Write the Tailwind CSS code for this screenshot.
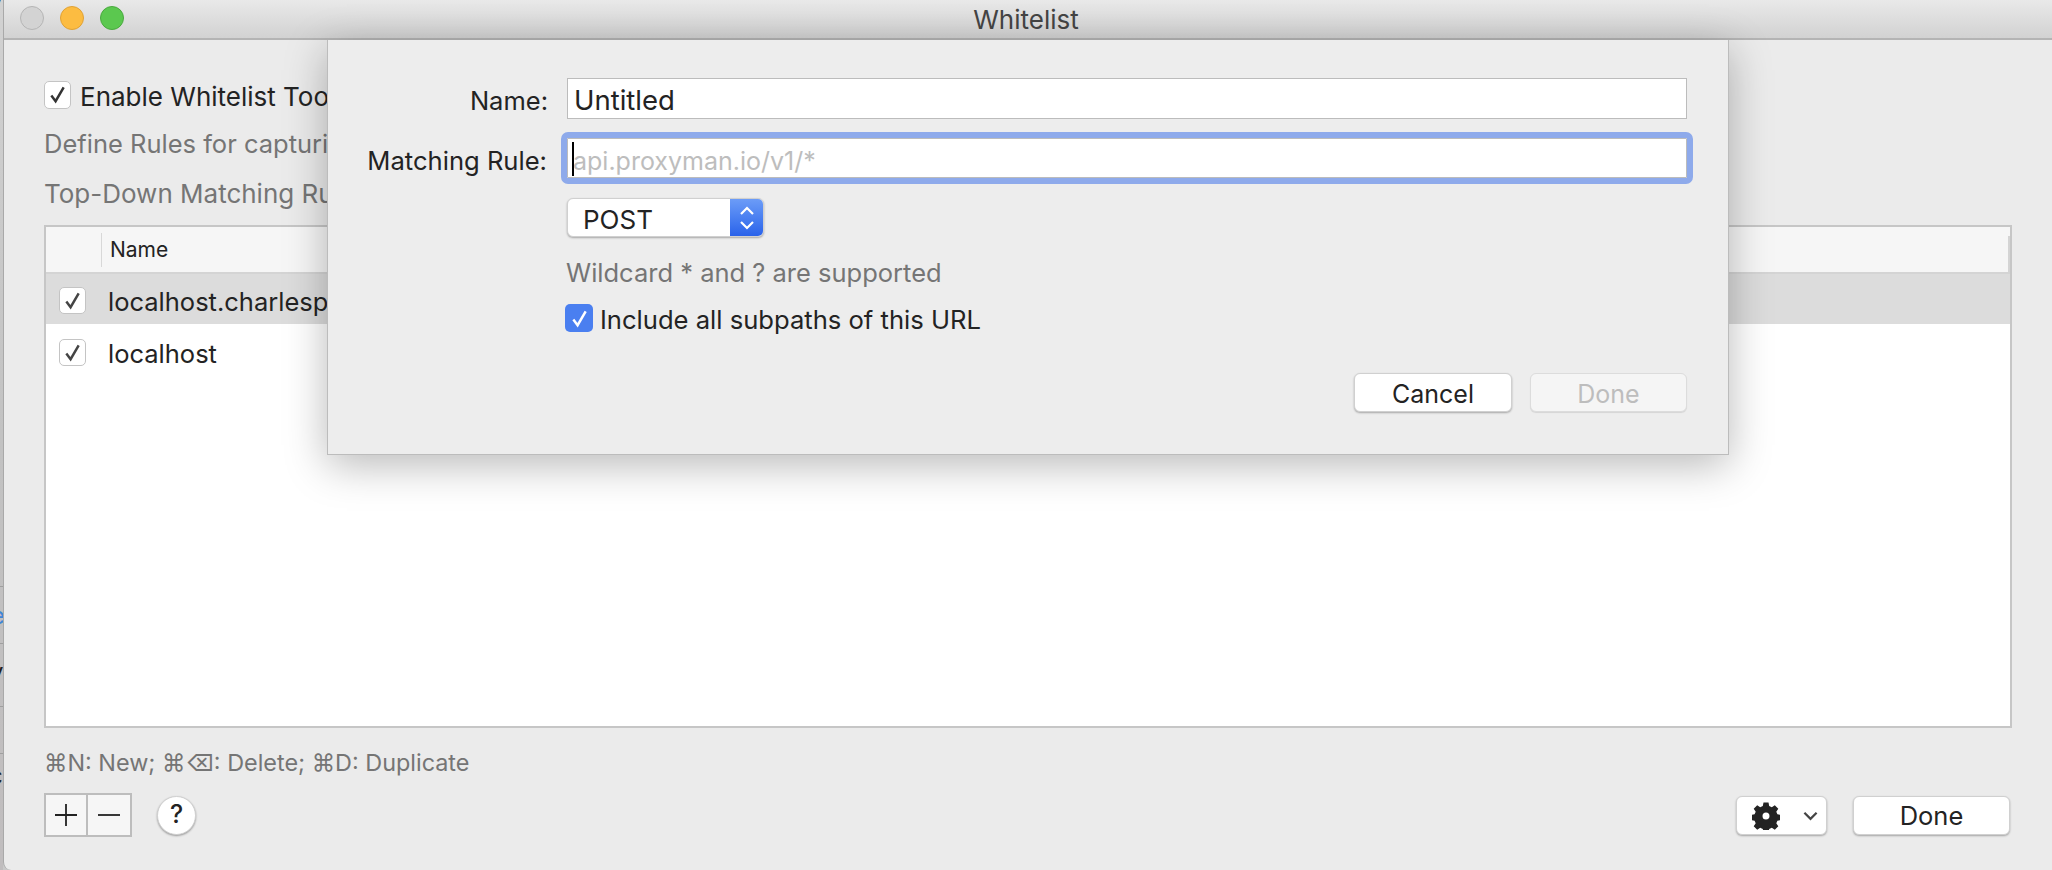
<!DOCTYPE html>
<html lang="en">
<head>
    <meta charset="UTF-8">
    <title>Whitelist</title>
    <script src="https://cdn.jsdelivr.net/npm/@tailwindcss/browser@4"></script>
</head>
<body class="bg-[#c9c9c9] font-['Inter',sans-serif] text-[#232323] overflow-hidden">
    <div class="relative w-[2052px] h-[870px] overflow-hidden flex">
        <!-- sliver of the window behind -->
        <div class="relative w-[3px] shrink-0 overflow-hidden bg-gradient-to-b from-[#d2d2d2] via-[#c2c2c2] to-[#c0bdbe]">
            <span class="absolute left-0 top-[586px] w-full h-[1px] bg-[#9f9f9f]"></span>
            <span class="absolute left-0 top-[643px] w-full h-[1px] bg-[#9f9f9f]"></span>
            <span class="absolute left-0 top-[706px] w-full h-[1px] bg-[#9f9f9f]"></span>
            <span class="absolute left-0 top-[753px] w-full h-[1px] bg-[#9f9f9f]"></span>
            <span class="absolute -left-[9px] top-[600px] text-[24px] leading-[32px] text-[#3f86d6]">e</span>
            <span class="absolute -left-[10px] top-[656px] text-[24px] leading-[32px] text-[#222]">v</span>
            <span class="absolute -left-[11px] top-[760px] text-[24px] leading-[32px] text-[#222]">c</span>
            <span class="absolute -left-[10px] -top-[17px] text-[24px] leading-[32px] text-[#222]">y</span>
        </div>

        <!-- main window -->
        <div class="flex-1 flex flex-col bg-[#ebebeb] border-l border-[#a9a9a9] rounded-bl-lg">
            <div class="relative h-[40px] shrink-0 flex items-center justify-center bg-gradient-to-b from-[#e9e9e9] to-[#d2d2d2] border-b-2 border-[#b4b4b4]">
                <div class="absolute left-[16px] top-[6px] flex gap-[16px]">
                    <span class="w-[24px] h-[24px] rounded-full bg-[#d3d3d3] border border-[#b5b5b5]"></span>
                    <span class="w-[24px] h-[24px] rounded-full bg-[#fcbc41] border border-[#e0a236]"></span>
                    <span class="w-[24px] h-[24px] rounded-full bg-[#5bc84f] border border-[#4aa93f]"></span>
                </div>
                <span class="text-[26px] text-[#444] -ml-[4px]">Whitelist</span>
            </div>

            <div class="flex-1 flex flex-col pl-[40px] pr-[40px]">
                <div class="h-[40px] mt-[36px] flex items-center gap-[9px]">
                    <span class="w-[27px] h-[28px] mb-[3px] rounded-[5px] bg-white border border-[#c4c4c4] flex items-center justify-center">
                        <svg class="w-[19px] h-[19px]" viewBox="0 0 20 20" fill="none" stroke="#333" stroke-width="2.6"><path d="M3.5 11 L8 17 L16.5 2.5"/></svg>
                    </span>
                    <span class="text-[26px]">Enable Whitelist Tool</span>
                </div>
                <p class="mt-[10px] h-[36px] leading-[36px] text-[25.5px] text-[#757575]">Define Rules for capturing</p>
                <p class="mt-[13px] h-[38px] leading-[38px] text-[26px] text-[#757575]">Top-Down Matching Rule</p>

                <!-- table -->
                <div class="mt-[12px] h-[503px] bg-white border-2 border-[#c6c6c6] flex flex-col">
                    <div class="h-[47px] shrink-0 bg-[#f6f6f6] border-b-2 border-[#d4d4d4] flex items-center">
                        <span class="w-[1px] h-[34px] ml-[55px] bg-[#d8d8d8]"></span>
                        <span class="ml-[8px] text-[21px]">Name</span>
                        <span class="ml-auto w-[2px] h-[36px] mt-[8px] bg-[#d4d4d4]"></span>
                    </div>
                    <div class="h-[50px] bg-[#dcdcdc] flex items-center pl-[13px] pt-[2px] gap-[22px]">
                        <span class="w-[27px] h-[27px] rounded-[5px] bg-white border border-[#c4c4c4] flex items-center justify-center">
                            <svg class="w-[19px] h-[19px]" viewBox="0 0 20 20" fill="none" stroke="#444" stroke-width="2.6"><path d="M3.5 11 L8 17 L16.5 2.5"/></svg>
                        </span>
                        <span class="text-[25.5px] pt-[5px]">localhost.charlesproxy.com</span>
                    </div>
                    <div class="h-[51px] flex items-center pl-[13px] pt-[5px] gap-[22px]">
                        <span class="w-[27px] h-[27px] rounded-[5px] bg-white border border-[#c4c4c4] flex items-center justify-center">
                            <svg class="w-[19px] h-[19px]" viewBox="0 0 20 20" fill="none" stroke="#444" stroke-width="2.6"><path d="M3.5 11 L8 17 L16.5 2.5"/></svg>
                        </span>
                        <span class="text-[25.5px] pt-[5px]">localhost</span>
                    </div>
                </div>

                <p class="mt-[19px] h-[32px] leading-[32px] text-[23.4px] text-[#757575]">⌘N: New; ⌘⌫: Delete; ⌘D: Duplicate</p>

                <div class="mt-[14px] flex items-start justify-between">
                    <div class="flex items-center">
                        <div class="flex border-2 border-[#bdbdbd] bg-[#f6f6f6] h-[44px]">
                            <span class="w-[42px] flex items-center justify-center border-r-2 border-[#bdbdbd]">
                                <svg class="w-[24px] h-[24px]" viewBox="0 0 24 24" stroke="#222" stroke-width="1.8"><path d="M1 12H23M12 1V23"/></svg>
                            </span>
                            <span class="w-[42px] flex items-center justify-center">
                                <svg class="w-[24px] h-[24px]" viewBox="0 0 24 24" stroke="#222" stroke-width="1.8"><path d="M1 12H23"/></svg>
                            </span>
                        </div>
                        <span class="ml-[25px] w-[39px] h-[39px] rounded-full bg-white border border-[#d0d0d0] shadow-[0_1px_2px_rgba(0,0,0,0.35)] flex items-center justify-center text-[25px] font-medium">?</span>
                    </div>
                    <div class="flex gap-[26px] mt-[3px] mr-[2px]">
                        <div class="w-[91px] h-[39px] rounded-[6px] bg-white border border-[#d0d0d0] shadow-[0_1px_2px_rgba(0,0,0,0.3)] flex items-center pl-[15px] gap-[23px]">
                            <svg class="w-[28px] h-[28px]" viewBox="0 0 28 28" fill="#232323"><path fill-rule="evenodd" d="M11.5 0.5h5l.7 3.6 2.6 1.1 3-2 3.5 3.5-2 3 1.1 2.6 3.6.7v5l-3.6.7-1.1 2.6 2 3-3.5 3.5-3-2-2.6 1.1-.7 3.6h-5l-.7-3.6-2.6-1.1-3 2-3.5-3.5 2-3-1.1-2.6-3.6-.7v-5l3.6-.7 1.1-2.6-2-3 3.500-3.500 3 2 2.600-1.100zM14 10.500a3.500 3.500 0 1 0 0 7a3.500 3.500 0 0 0 0-7z"/></svg>
                            <svg class="w-[15px] h-[10px]" viewBox="0 0 16 10" fill="none" stroke="#444" stroke-width="2.4"><path d="M1.500 1.500L8 8L14.500 1.500"/></svg>
                        </div>
                        <button class="w-[157px] h-[39px] rounded-[6px] bg-white border border-[#d0d0d0] shadow-[0_1px_2px_rgba(0,0,0,0.3)] text-[25.5px] pt-[2px] flex items-center justify-center">Done</button>
                    </div>
                </div>
            </div>
        </div>

        <!-- sheet -->
        <div class="absolute left-[327px] top-[40px] w-[1402px] h-[415px] bg-[#ededed] border-x border-b border-[#bcbcbc] shadow-[0_10px_40px_rgba(0,0,0,0.28)] flex flex-col pl-[239px] pr-[41px] pt-[38px]">
            <div class="relative h-[41px] bg-white border border-[#bcbcbc] flex items-center pl-[6px] pt-[5px] text-[27.5px]">
                <span class="absolute right-[100%] mr-[20px] whitespace-nowrap text-[25.5px]">Name:</span>
                Untitled
            </div>
            <div class="relative mt-[19px] h-[40px] bg-white border border-[#bcbcbc] outline-[6px] outline-[#8eaaeb] rounded-[1px] flex items-center pl-[5px] pt-[7px] text-[25px] text-[#bdbdbd]">
                <span class="absolute right-[100%] mr-[21px] whitespace-nowrap text-[25.6px] text-[#232323]">Matching Rule:</span>
                <span class="absolute left-[4px] top-[3px] w-[2px] h-[34px] bg-black"></span>
                api.proxyman.io/v1/*
            </div>
            <div class="mt-[20px] w-[197px] h-[39px] rounded-[6px] bg-white border border-[#d0d0d0] shadow-[0_1px_2px_rgba(0,0,0,0.3)] flex items-center justify-between overflow-hidden text-[26px]">
                <span class="pl-[15px] pt-[4px]">POST</span>
                <span class="w-[33px] h-full bg-gradient-to-b from-[#6c9cf7] to-[#2a62ea] flex items-center justify-center">
                    <svg class="w-[16px] h-[30px]" viewBox="0 0 16 30" fill="none" stroke="#fff" stroke-width="2.2"><path d="M2 11L8 5L14 11M2 19L8 25L14 19"/></svg>
                </span>
            </div>
            <p class="mt-[18px] -ml-[1px] h-[36px] leading-[36px] text-[25.5px] text-[#757575]">Wildcard * and ? are supported</p>
            <div class="mt-[12px] flex items-center gap-[7px] h-[30px] -ml-[2px]">
                <span class="w-[28px] h-[28px] rounded-[5px] bg-[#4a7ff0] flex items-center justify-center">
                    <svg class="w-[19px] h-[19px]" viewBox="0 0 20 20" fill="none" stroke="#fff" stroke-width="2.6"><path d="M3.5 11 L8 17 L16.5 2.5"/></svg>
                </span>
                <span class="text-[25.6px] pt-[4px]">Include all subpaths of this URL</span>
            </div>
            <div class="mt-[40px] flex justify-end gap-[18px]">
                <button class="w-[158px] h-[39px] rounded-[6px] bg-white border border-[#d0d0d0] shadow-[0_1px_2px_rgba(0,0,0,0.3)] text-[25px] pt-[4px] flex items-center justify-center">Cancel</button>
                <button class="w-[157px] h-[39px] rounded-[6px] bg-[#f5f5f5] border border-[#dcdcdc] shadow-[0_1px_1px_rgba(0,0,0,0.1)] text-[25px] pt-[4px] text-[#bdbdbd] flex items-center justify-center">Done</button>
            </div>
        </div>
    </div>
</body>
</html>
